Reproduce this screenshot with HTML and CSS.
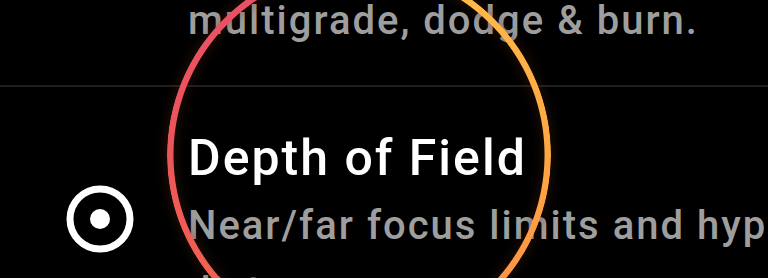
FILE: index.html
```html
<!DOCTYPE html>
<html lang="en">
<head>
    <meta charset="UTF-8">
    <meta name="viewport" content="width=device-width, initial-scale=1.0">
    <title>Tools - Onboarding</title>
    <link rel="stylesheet" href="styles.css">
</head>
<body>
    <div class="list">
        <div class="item item-top">
            <div class="icon-slot"></div>
            <div class="text">
                <div class="desc">multigrade, dodge &amp; burn.</div>
            </div>
        </div>
        <div class="divider"></div>
        <div class="item item-main">
            <div class="icon-slot">
                <svg class="radio" width="68" height="68" viewBox="0 0 68 68">
                    <circle cx="34" cy="34" r="30" fill="none" stroke="#fff" stroke-width="7"/>
                    <circle cx="34" cy="34" r="10" fill="#fff"/>
                </svg>
            </div>
            <div class="text">
                <div class="title">Depth of Field</div>
                <div class="desc">Near/far focus limits and hyperfocal distance.</div>
            </div>
        </div>
    </div>
    <!-- Spotlight ring -->
    <div class="spotlight">
        <div class="ring"></div>
    </div>
</body>
</html>
```

FILE: styles.css
```css
* {
    margin: 0;
    padding: 0;
    box-sizing: border-box;
}
body {
    background: #000;
    font-family: Roboto, "Noto Sans", sans-serif;
    width: 768px;
    height: 278px;
    overflow: hidden;
    position: relative;
}
.list {
    display: flex;
    flex-direction: column;
}
.item {
    display: flex;
    align-items: flex-start;
    padding-left: 66px;
}
.item-top {
    margin-top: -9px;
    padding-bottom: 34px;
}
.item-main {
    padding-top: 43px;
}
.icon-slot {
    width: 68px;
    flex: 0 0 68px;
    margin-right: 54px;
}
.radio {
    display: block;
    margin-top: 55px;
}
.text {
    flex: 0 0 780px;
}
.title {
    font-size: 50px;
    font-weight: 500;
    line-height: 56px;
    letter-spacing: 2px;
    color: #fff;
    margin-bottom: 7px;
}
.desc {
    font-size: 40px;
    font-weight: 500;
    line-height: 66px;
    letter-spacing: 2px;
    color: #9e9e9e;
}
.item-top .desc {
    line-height: 60px;
}
.divider {
    height: 2px;
    background: #1f1f1f;
}
/* spotlight overlay */
.spotlight {
    position: absolute;
    left: 167px;
    top: -37px;
    width: 384px;
    height: 384px;
    filter: drop-shadow(0 0 6px rgba(90, 40, 20, 0.6));
}
.ring {
    width: 100%;
    height: 100%;
    border-radius: 50%;
    background: conic-gradient(from 0deg, #ffc64b, #ffa645 90deg, #fb8a46 160deg, #f4664e 215deg, #ec5659 270deg, #e84c6e 360deg);
    -webkit-mask: radial-gradient(circle closest-side, transparent 185px, #000 186px);
    mask: radial-gradient(circle closest-side, transparent 185px, #000 186px);
}
```
